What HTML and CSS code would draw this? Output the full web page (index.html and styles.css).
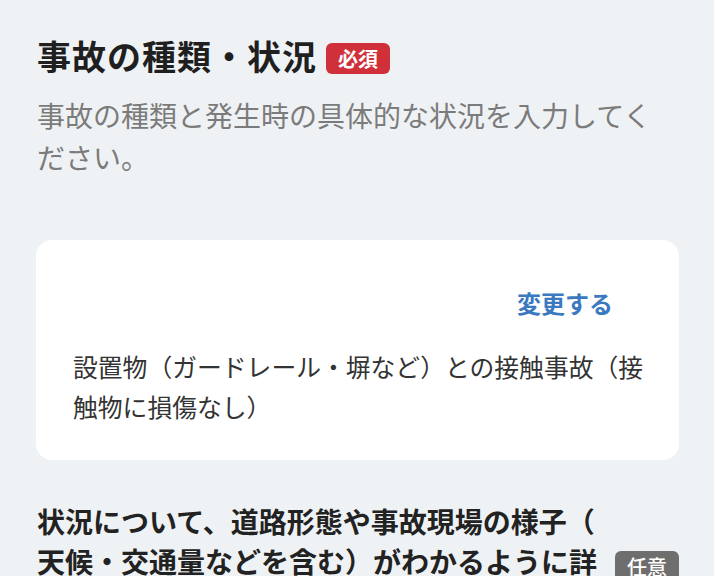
FILE: index.html
```html
<!DOCTYPE html>
<html lang="ja">
<head>
  <meta charset="UTF-8">
  <meta name="viewport" content="width=device-width, initial-scale=1.0">
  <title>事故の種類・状況</title>
  <link rel="stylesheet" href="styles.css">
</head>
<body>

  <!-- Accident type section -->
  <div class="section">
    <div class="section-head">
      <h1 class="section-title">事故の種類・状況</h1>
      <span class="tag tag-required">必須</span>
    </div>
    <p class="section-note">事故の種類と発生時の具体的な状況を入力してください。</p>

    <div class="card">
      <div class="card-actions">
        <a class="change-link" href="#">変更する</a>
      </div>
      <p class="card-text">設置物（ガードレール・塀など）との接触事故（接触物に損傷なし）</p>
    </div>
  </div>

  <!-- Free description -->
  <div class="field-head">
    <h2 class="field-title">状況について、道路形態や事故現場の様子（天候・交通量などを含む）がわかるように詳細に入力してください</h2>
    <span class="tag tag-optional">任意</span>
  </div>

</body>
</html>
```

FILE: styles.css
```css
/* General Body Styles */
body {
  margin: 0;
  padding: 32px 35px 0 37px;
  background: #eff2f4;
  font-family: "Noto Sans CJK JP", "Noto Sans", sans-serif;
  color: #222222;
}

/* Section heading */
.section-head {
  display: flex;
  align-items: center;
  gap: 9px;
}

.section-title {
  margin: 0;
  font-size: 34px;
  line-height: 48px;
  letter-spacing: 1px;
  font-weight: 700;
  color: #1f1f1f;
}

.tag {
  display: inline-block;
  flex-shrink: 0;
  width: 64px;
  height: 31px;
  line-height: 31px;
  border-radius: 6px;
  color: white;
  text-align: center;
  font-size: 20px;
  font-weight: 700;
}

.tag-required {
  background: #d0303a;
  margin-top: 4px;
}

.tag-optional {
  background: #6e6e6e;
  font-weight: 500;
  margin-top: 10px;
}

.section-note {
  margin: 14px 0 0;
  font-size: 28px;
  line-height: 42px;
  color: #7b7b7b;
}

/* Selected value card */
.card {
  margin: 62px 0 0 -1px;
  padding: 36px 34px 34px 37px;
  background: white;
  border-radius: 16px;
}

.card-actions {
  display: flex;
  justify-content: flex-end;
}

.change-link {
  padding: 7px 32px;
  font-size: 24px;
  line-height: 40px;
  font-weight: 700;
  color: #3a78c0;
  text-decoration: none;
}

.card-text {
  margin: 16px 0 0;
  font-size: 24.8px;
  line-height: 40px;
  color: #333333;
}

/* Free text field heading */
.field-head {
  display: flex;
  align-items: center;
  gap: 14px;
  margin-top: 41px;
}

.field-title {
  flex: 1;
  margin: 0;
  font-size: 28px;
  line-height: 40px;
  font-weight: 700;
  color: #222222;
  line-break: anywhere;
}
```
